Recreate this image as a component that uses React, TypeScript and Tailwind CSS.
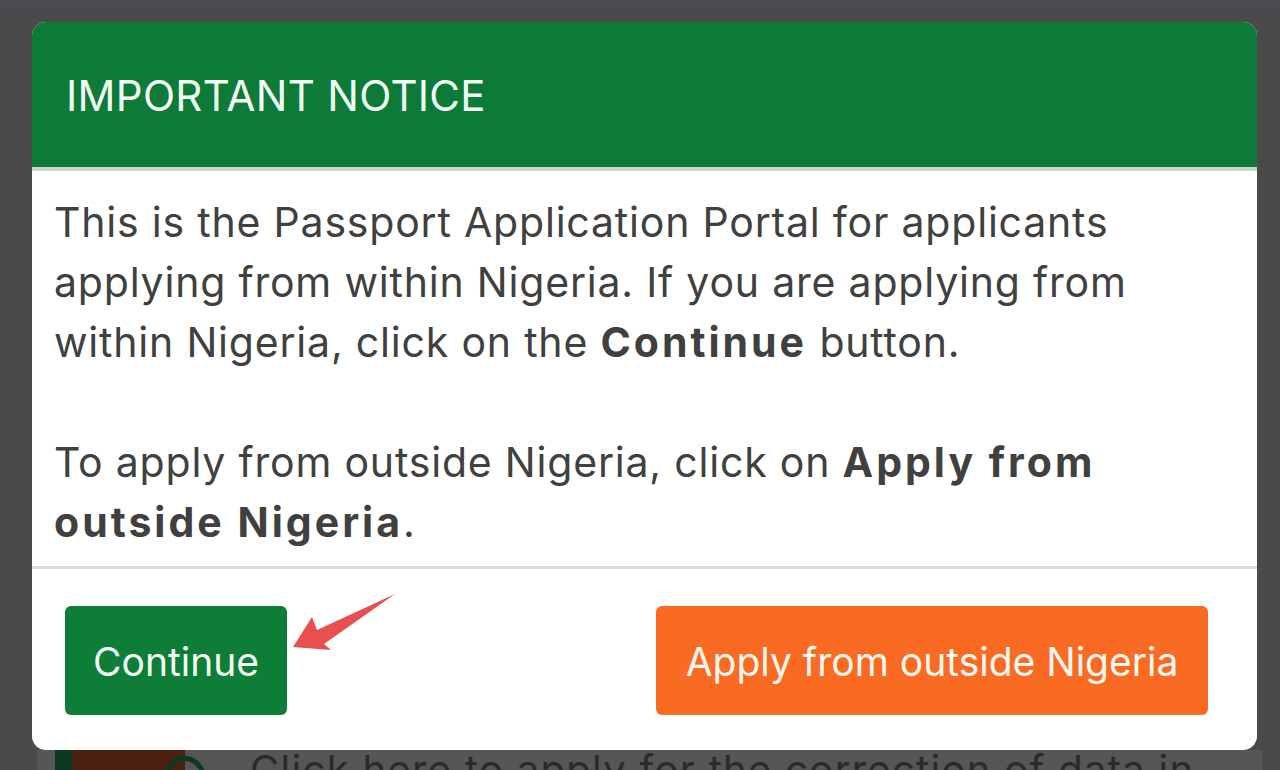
export default function App() {
  return (
    <div
      className="relative w-[1280px] h-[770px] overflow-hidden bg-[#4a4a4b]"
      style={{ fontFamily: "Inter, 'Noto Sans', sans-serif" }}
    >
      {/* page behind the overlay */}
      <div className="h-[10px] bg-[#4c4a51]" />
      <div className="flex h-[760px] flex-col justify-end">
        <div className="ml-[37px] mr-[18px] flex h-[20px] items-start overflow-hidden bg-[#565656]">
          <div className="ml-[18px] flex h-[40px] w-[130px] shrink-0">
            <div className="h-full w-[17px] bg-[#0d3a1e]" />
            <div className="h-full w-[113px] bg-[#4a2010]" />
          </div>
          <div className="-ml-[20px] mt-[6px] h-[40px] w-[40px] shrink-0 rounded-full border-[5px] border-[#0d3a1e]" />
          <div className="ml-[45px] -mt-[5px] whitespace-nowrap text-[40px] leading-[50px] tracking-[1.3px] text-[#2a2a2a]">
            Click here to apply for the correction of data in
          </div>
        </div>
      </div>

      {/* modal */}
      <div className="absolute left-[32px] top-[22px] flex h-[728px] w-[1225px] flex-col overflow-hidden rounded-[14px] bg-white">
        <div className="flex h-[149px] shrink-0 items-center border-b-[4px] border-[#c5d7ca] bg-[#0e7a37] px-[34px]">
          <h1 className="pt-[2px] text-[42px] font-normal tracking-[0.3px] text-[#f2fff4]">IMPORTANT NOTICE</h1>
        </div>
        <div className="px-[22px] pt-[21px] pb-[14px] text-[41px] leading-[60px] tracking-[0.8px] text-[#404040]">
          <p className="whitespace-nowrap">
            This is the Passport Application Portal for applicants
            <br />
            applying from within Nigeria. If you are applying from
            <br />
            within Nigeria, click on the <strong className="font-bold tracking-[3px]">Continue</strong> button.
            <br />
            <br />
            To apply from outside Nigeria, click on <strong className="font-bold tracking-[3px]">Apply from</strong>
            <br />
            <strong className="font-bold tracking-[3px]">outside Nigeria</strong>.
          </p>
        </div>
        <div className="h-[3px] bg-[#d9d9d9]" />
        <div className="flex items-start justify-between pl-[33px] pr-[49px] pt-[37px]">
          <button className="flex h-[109px] w-[222px] items-center justify-center rounded-[6px] bg-[#0e7d38] pt-[3px] text-[39px] text-[#f3fff3]">
            Continue
          </button>
          <button className="flex h-[109px] w-[552px] items-center justify-center rounded-[6px] bg-[#f96b22] pt-[3px] text-[39px] text-[#fff8f2]">
            Apply from outside Nigeria
          </button>
        </div>
      </div>

      {/* annotation arrow */}
      <svg className="absolute left-0 top-0" width="1280" height="770" viewBox="0 0 1280 770">
        <polygon
          points="293,647 312,617 317,630 395,594 324,644 331,650"
          fill="#e94f4f"
        />
      </svg>
    </div>
  );
}
